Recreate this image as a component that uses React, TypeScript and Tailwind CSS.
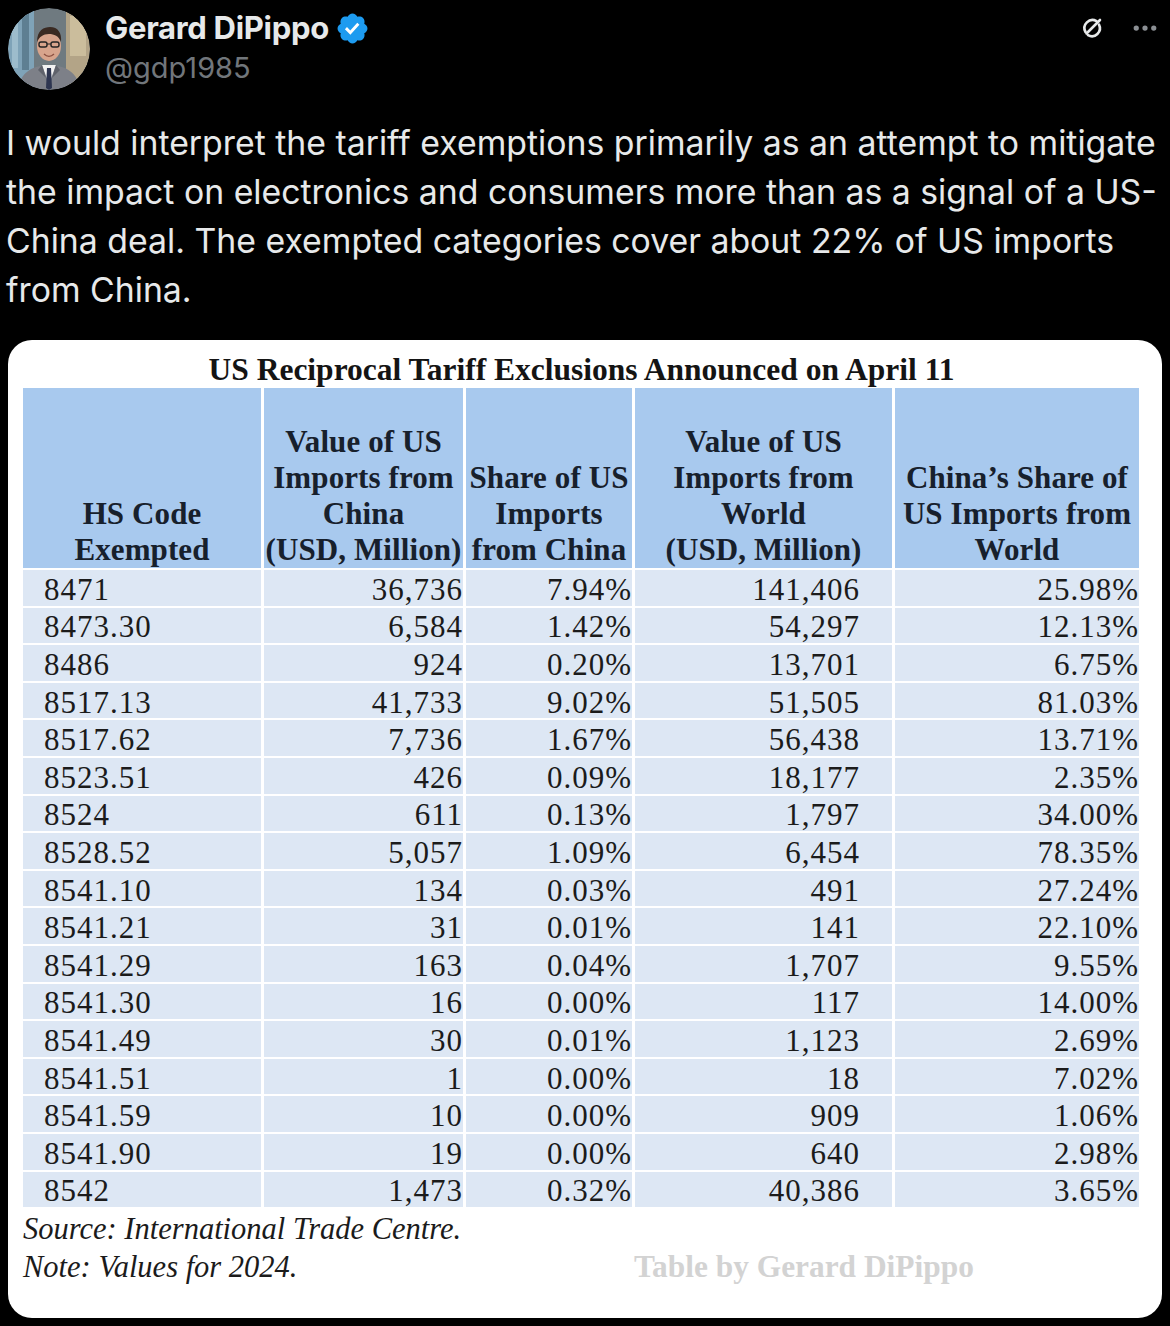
import { MoreHorizontal } from 'lucide-react';

const rows: string[][] = [
  ['8471', '36,736', '7.94%', '141,406', '25.98%'],
  ['8473.30', '6,584', '1.42%', '54,297', '12.13%'],
  ['8486', '924', '0.20%', '13,701', '6.75%'],
  ['8517.13', '41,733', '9.02%', '51,505', '81.03%'],
  ['8517.62', '7,736', '1.67%', '56,438', '13.71%'],
  ['8523.51', '426', '0.09%', '18,177', '2.35%'],
  ['8524', '611', '0.13%', '1,797', '34.00%'],
  ['8528.52', '5,057', '1.09%', '6,454', '78.35%'],
  ['8541.10', '134', '0.03%', '491', '27.24%'],
  ['8541.21', '31', '0.01%', '141', '22.10%'],
  ['8541.29', '163', '0.04%', '1,707', '9.55%'],
  ['8541.30', '16', '0.00%', '117', '14.00%'],
  ['8541.49', '30', '0.01%', '1,123', '2.69%'],
  ['8541.51', '1', '0.00%', '18', '7.02%'],
  ['8541.59', '10', '0.00%', '909', '1.06%'],
  ['8541.90', '19', '0.00%', '640', '2.98%'],
  ['8542', '1,473', '0.32%', '40,386', '3.65%'],
];

const headers: string[][] = [
  ['HS Code', 'Exempted'],
  ['Value of US', 'Imports from', 'China', '(USD, Million)'],
  ['Share of US', 'Imports', 'from China'],
  ['Value of US', 'Imports from', 'World', '(USD, Million)'],
  ['China\u2019s Share of', 'US Imports from', 'World'],
];

// per-column alignment for the body cells
const cellAlign = [
  'justify-start pl-[21px]',
  'justify-end pr-0',
  'justify-end pr-0',
  'justify-end pr-[32px]',
  'justify-end pr-0',
];

function Avatar() {
  return (
    <svg viewBox="0 0 82 82" className="h-[82px] w-[82px] rounded-full">
      <defs>
        <clipPath id="av">
          <circle cx="41" cy="41" r="41" />
        </clipPath>
      </defs>
      <g clipPath="url(#av)">
        <rect width="82" height="82" fill="#6f7a80" />
        <rect x="0" y="0" width="26" height="82" fill="#7fa3b8" />
        <rect x="4" y="10" width="6" height="50" fill="#9dbccc" />
        <rect x="14" y="6" width="7" height="56" fill="#5e7f92" />
        <rect x="58" y="0" width="24" height="82" fill="#b3a487" />
        <rect x="62" y="8" width="16" height="40" fill="#cbbd9c" />
        <path d="M10 82 C12 64 24 58 41 57 C58 58 70 64 72 82 Z" fill="#7d8088" />
        <path d="M34 57 L41 76 L48 57 Z" fill="#f2f2f2" />
        <path d="M39 60 L43 60 L44 80 L41 82 L38 80 Z" fill="#2d3550" />
        <path d="M34 57 L38 70 L30 62 Z" fill="#5f626b" />
        <path d="M48 57 L44 70 L52 62 Z" fill="#5f626b" />
        <ellipse cx="41" cy="38" rx="12" ry="15" fill="#d7a48c" />
        <path d="M29 34 C29 22 36 19 42 19 C50 19 54 25 53 34 C51 28 46 26 41 26 C35 26 31 29 29 34 Z" fill="#3a2a22" />
        <rect x="31" y="34" width="8" height="5" rx="2" fill="none" stroke="#222" strokeWidth="1.4" />
        <rect x="43" y="34" width="8" height="5" rx="2" fill="none" stroke="#222" strokeWidth="1.4" />
        <path d="M39 36 L43 36" stroke="#222" strokeWidth="1.2" />
        <path d="M36 46 C39 49 43 49 46 46" stroke="#8a4f40" strokeWidth="1.3" fill="none" />
      </g>
    </svg>
  );
}

function Verified() {
  return (
    <svg viewBox="0 0 24 24" className="h-[35px] w-[35px]">
      <path
        fill="#1d9bf0"
        d="M22.25 12c0-1.43-.88-2.67-2.19-3.34.46-1.39.2-2.9-.81-3.91s-2.52-1.27-3.91-.81c-.66-1.31-1.91-2.19-3.34-2.19s-2.67.88-3.33 2.19c-1.4-.46-2.91-.2-3.92.81s-1.26 2.52-.8 3.91c-1.31.67-2.2 1.91-2.2 3.34s.89 2.67 2.2 3.34c-.46 1.39-.21 2.9.8 3.91s2.52 1.26 3.91.81c.67 1.310 1.91 2.19 3.34 2.19s2.68-.88 3.34-2.19c1.39.45 2.9.2 3.91-.81s1.27-2.52.81-3.91c1.31-.67 2.19-1.91 2.19-3.34z"
      />
      <path fill="#fff" d="M10.54 16.2L6.8 12.46l1.41-1.42 2.26 2.26 4.8-5.23 1.47 1.36-6.2 6.77z" />
    </svg>
  );
}

function GrokIcon() {
  return (
    <svg viewBox="0 0 24 24" className="h-[24px] w-[24px]" fill="none" stroke="#e7e9ea" strokeWidth="2.6" strokeLinecap="round">
      <path d="M16.5 5.2 A8 8 0 0 0 5.5 16" />
      <path d="M8 19.2 A8 8 0 0 0 19 8.6" />
      <path d="M20 4 L6.5 17.5" />
    </svg>
  );
}

export default function App() {
  return (
    <div className="min-h-[1326px] w-[1170px] bg-black pb-[10px]" style={{ fontFamily: 'Inter, "Noto Sans", sans-serif' }}>
      {/* tweet header */}
      <div className="flex items-start pl-[8px] pr-[10px] pt-[8px]">
        <Avatar />
        <div className="ml-[15px] flex flex-col">
          <div className="flex h-[40px] items-center gap-[6px]">
            <span className="text-[31px] font-bold tracking-[-0.3px] text-[#e7e9ea]">Gerard DiPippo</span>
            <Verified />
          </div>
          <span className="text-[29px] leading-[40px] text-[#71767b]">@gdp1985</span>
        </div>
        <div className="ml-auto flex h-[40px] items-center gap-[26px]">
          <GrokIcon />
          <MoreHorizontal className="h-[30px] w-[30px] text-[#8b8f94]" strokeWidth={2.2} />
        </div>
      </div>

      {/* tweet text */}
      <div className="mt-[28px] pl-[6px] text-[33.8px] leading-[49px] text-[#e7e9ea]">
        <div className="whitespace-nowrap">I would interpret the tariff exemptions primarily as an attempt to mitigate</div>
        <div className="whitespace-nowrap">the impact on electronics and consumers more than as a signal of a US-</div>
        <div className="whitespace-nowrap">China deal. The exempted categories cover about 22% of US imports</div>
        <div className="whitespace-nowrap">from China.</div>
      </div>

      {/* table image card */}
      <div
        className="mx-[8px] mt-[26px] rounded-[24px] bg-white pb-[32px] pl-[15px] pr-[22px] pt-[12px] text-[#1b1b1b]"
        style={{ fontFamily: '"Liberation Serif", "DejaVu Serif", serif' }}
      >
        <div className="text-center text-[31.5px] font-bold leading-[36px] text-[#141414]">
          US Reciprocal Tariff Exclusions Announced on April 11
        </div>

        <div className="grid grid-cols-[238px_199px_166px_257px_244px] gap-x-[3px] gap-y-[2px]">
          {headers.map((lines, i) => (
            <div
              key={i}
              className="flex h-[180px] flex-col items-center justify-end bg-[#a8c9ee] text-center text-[31px] font-bold leading-[36px] tracking-[0.1px] text-[#17202c]"
            >
              {lines.map((l) => (
                <span key={l} className="whitespace-nowrap">
                  {l}
                </span>
              ))}
            </div>
          ))}
          {rows.map((r) =>
            r.map((v, j) => (
              <div
                key={r[0] + j}
                className={`flex h-[35.6px] items-center bg-[#dde7f4] pt-[3px] text-[31px] leading-none tracking-[1px] ${cellAlign[j]}`}
              >
                {v}
              </div>
            ))
          )}
        </div>

        <div className="mt-[3px] grid grid-cols-[611px_auto] text-[30.5px] italic leading-[38px] text-[#1b1b1b]">
          <div className="col-span-2">Source: International Trade Centre.</div>
          <div>Note: Values for 2024.</div>
          <div className="text-[31.4px] font-bold not-italic text-[#d3d3d3]">Table by Gerard DiPippo</div>
        </div>
      </div>
    </div>
  );
}
